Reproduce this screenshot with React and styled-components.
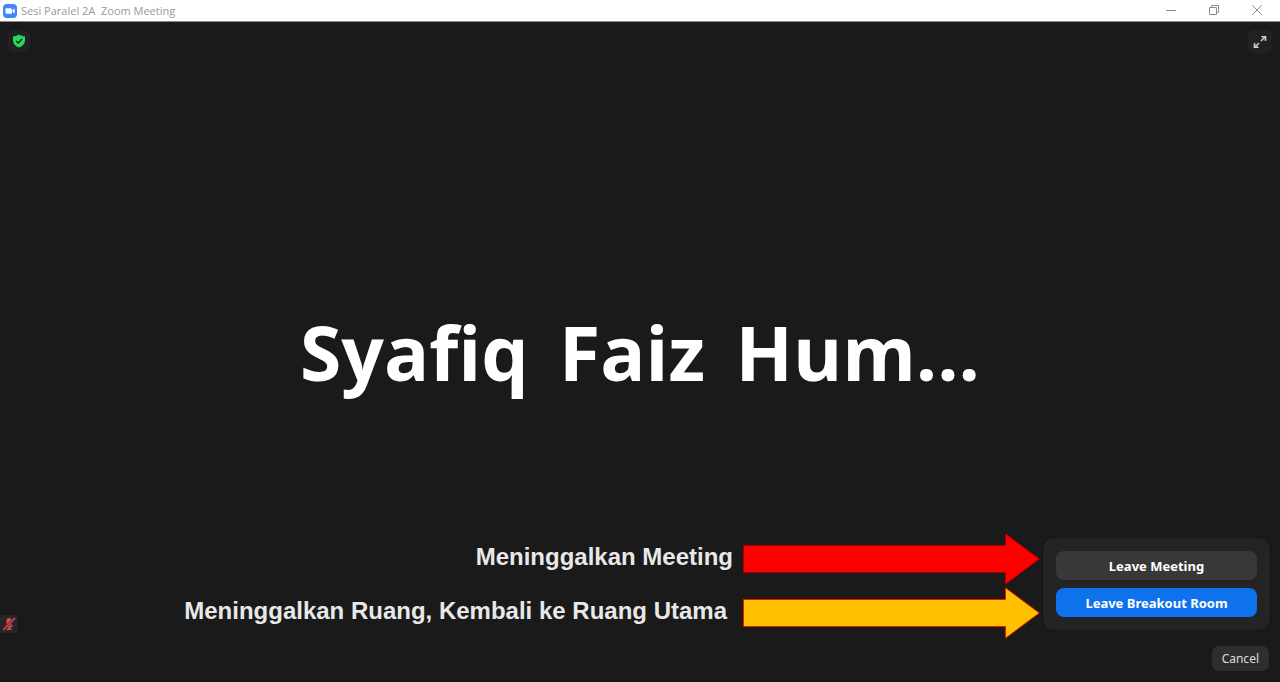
import React from "react";
import styled, { createGlobalStyle } from "styled-components";

const GlobalStyle = createGlobalStyle`
  *, *::before, *::after { box-sizing: border-box; }
  body {
    margin: 0;
    background: #1a1a1a;
    font-family: "Noto Sans", "Open Sans", sans-serif;
  }
  button { font-family: inherit; cursor: pointer; }
  svg { display: block; flex: none; }
`;

const Window = styled.div`
  display: flex;
  flex-direction: column;
  min-height: 100vh;
`;

const TitleBar = styled.header`
  display: flex;
  align-items: center;
  height: 22px;
  padding: 0 3px;
  background: #ffffff;
  border-bottom: 1px solid #8a8a8a;
`;

const Title = styled.h1`
  flex: 1;
  margin: 0 0 0 4px;
  color: #999999;
  font-family: "Open Sans", sans-serif;
  font-size: 11px;
  font-weight: 400;
  line-height: 20px;
  white-space: pre;
`;

const WindowControls = styled.div`
  display: flex;
  align-self: flex-start;
  gap: 3px;
`;

const WindowButton = styled.button`
  display: grid;
  place-items: center;
  width: 40px;
  height: 20px;
  padding: 0;
  border: 0;
  background: none;
  color: #8c8c8c;
`;

const Stage = styled.main`
  display: flex;
  flex: 1;
  flex-direction: column;
  border-bottom: 2px solid #161616;
`;

const StageTop = styled.div`
  display: flex;
  justify-content: space-between;
  padding: 8px 8px 0;
`;

const CornerButton = styled.button`
  display: grid;
  place-items: center;
  width: ${(p) => p.$size}px;
  height: ${(p) => p.$size}px;
  padding: 0;
  border: 0;
  border-radius: 6px;
  background: #212121;
`;

const NameArea = styled.div`
  display: flex;
  flex: 1;
  align-items: center;
  justify-content: center;
  padding-top: 116px;
`;

const ParticipantName = styled.p`
  display: flex;
  gap: 11px;
  margin: 0;
  color: #ffffff;
  font-family: "Open Sans", "Noto Sans", sans-serif;
  font-size: 75px;
  font-weight: 700;
  line-height: 106px;
  white-space: pre;
`;

const StageBottom = styled.div`
  display: flex;
  align-items: flex-end;
  gap: 2px;
  padding-right: 9px;
`;

const MuteBadge = styled.div`
  display: grid;
  place-items: center;
  width: 17px;
  height: 18px;
  margin-bottom: 6px;
  background: #272727;
`;

const Notes = styled.div`
  display: flex;
  flex: 1;
  flex-direction: column;
  gap: 2px;
`;

const Note = styled.div`
  display: flex;
  align-items: center;
  justify-content: flex-end;
  gap: ${(p) => p.$gap}px;
`;

const NoteText = styled.p`
  margin: 0;
  padding-bottom: 4px;
  color: #e8e8e8;
  font-family: "Liberation Sans", Arial, sans-serif;
  font-size: 24px;
  font-weight: 700;
  line-height: 28px;
`;

const LeavePanel = styled.section`
  display: flex;
  flex-direction: column;
  gap: 8px;
  width: 229px;
  margin-bottom: 8px;
  padding: 13px;
  border: 1px solid #151515;
  border-radius: 12px;
  background: #242424;
`;

const LeaveButton = styled.button`
  height: 29px;
  padding: 0;
  border: 0;
  border-radius: 8px;
  background: ${(p) => (p.$primary ? "#0e72ed" : "#383838")};
  color: #ffffff;
  font-size: 13px;
  font-weight: 700;
  line-height: 18px;
`;

const Footer = styled.div`
  display: flex;
  justify-content: flex-end;
  padding: 7px 11px 9px;
`;

const CancelButton = styled.button`
  height: 25px;
  padding: 0 10px;
  border: 0;
  border-radius: 7px;
  background: #2e2e2e;
  color: #dddddd;
  font-size: 12px;
  line-height: 16px;
`;

function Arrow({ fill, stroke }) {
  return (
    <svg width="297" height="52" viewBox="0 0 297 52" aria-hidden="true">
      <path
        d="M.5 12.5H262.500V.8L296.300 26 262.500 51.200V39.500H.5z"
        fill={fill}
        stroke={stroke}
      />
    </svg>
  );
}

function ZoomLogo() {
  return (
    <svg width="14" height="14" viewBox="0 0 14 14" aria-hidden="true">
      <rect width="14" height="14" rx="4" fill="#4087fc" />
      <path d="M2.500 4.200h5q1.500 0 1.500 1.500v4H4Q2.500 9.700 2.500 8.200zM9.500 6.100l2.200-1.600v5l-2.200-1.600z" fill="#fff" />
    </svg>
  );
}

export default function App() {
  return (
    <>
      <GlobalStyle />
      <Window>
        <TitleBar>
          <ZoomLogo />
          <Title>{"Sesi Paralel 2A  Zoom Meeting"}</Title>
          <WindowControls>
            <WindowButton aria-label="Minimize">
              <svg width="10" height="10" viewBox="0 0 10 10">
                <path d="M0 5.500h10" stroke="currentColor" />
              </svg>
            </WindowButton>
            <WindowButton aria-label="Restore">
              <svg width="10" height="10" viewBox="0 0 10 10" fill="none" stroke="currentColor">
                <path d="M.5 2.500h7v7h-7zM2.500 2.500v-2h7v7h-2" />
              </svg>
            </WindowButton>
            <WindowButton aria-label="Close">
              <svg width="10" height="10" viewBox="0 0 10 10">
                <path d="M.3.3l9.400 9.400M9.700.3L.3 9.700" stroke="currentColor" />
              </svg>
            </WindowButton>
          </WindowControls>
        </TitleBar>
        <Stage>
          <StageTop>
            <CornerButton $size={22} aria-label="Meeting information">
              <svg width="12" height="14" viewBox="0 0 12 14">
                <path d="M6 .5c1.800 1.200 3.600 1.800 6 1.900v4.400c0 3-2.200 5.300-6 6.700C2.200 12.100 0 9.800 0 6.800V2.400C2.400 2.300 4.200 1.700 6 .5z" fill="#23d959" />
                <path d="M3.300 7l2 2 3.700-3.900" fill="none" stroke="#1a1a1a" strokeWidth="1.500" />
              </svg>
            </CornerButton>
            <CornerButton $size={24} aria-label="Enter full screen">
              <svg width="14" height="14" viewBox="0 0 14 14">
                <path d="M8 6l4-4M6 8l-4 4" stroke="#d0d0d0" strokeWidth="1.500" />
                <path d="M8.300 1h5v5l-1.700-.3V2.800L8.600 2.600zM5.700 13h-5V8l1.700.3v2.900l3 .2z" fill="#d0d0d0" />
              </svg>
            </CornerButton>
          </StageTop>
          <NameArea>
            <ParticipantName>
              <span>{"Syafiq "}</span>
              <span>{"Faiz "}</span>
              <span>Hum...</span>
            </ParticipantName>
          </NameArea>
          <StageBottom>
            <MuteBadge role="img" aria-label="Microphone muted">
              <svg width="14" height="14" viewBox="0 0 14 14">
                <rect x="4.500" y="1" width="5" height="8" rx="2.500" fill="#e0484c" />
                <path d="M7 9v3M4.500 12.300h5M4 8Q4.500 10 7 10t3-2" fill="none" stroke="#e0484c" strokeWidth="1.500" />
                <path d="M1 13L13 1" stroke="#272727" strokeWidth="2.600" />
                <path d="M1 13L13 1" stroke="#e0484c" strokeWidth="1.500" />
              </svg>
            </MuteBadge>
            <Notes>
              <Note $gap={10}>
                <NoteText>Meninggalkan Meeting</NoteText>
                <Arrow fill="#ff0000" stroke="#a80000" />
              </Note>
              <Note $gap={16}>
                <NoteText>Meninggalkan Ruang, Kembali ke Ruang Utama</NoteText>
                <Arrow fill="#ffc000" stroke="#e81800" />
              </Note>
            </Notes>
            <LeavePanel aria-label="Leave options">
              <LeaveButton>Leave Meeting</LeaveButton>
              <LeaveButton $primary>Leave Breakout Room</LeaveButton>
            </LeavePanel>
          </StageBottom>
          <Footer>
            <CancelButton>Cancel</CancelButton>
          </Footer>
        </Stage>
      </Window>
    </>
  );
}
